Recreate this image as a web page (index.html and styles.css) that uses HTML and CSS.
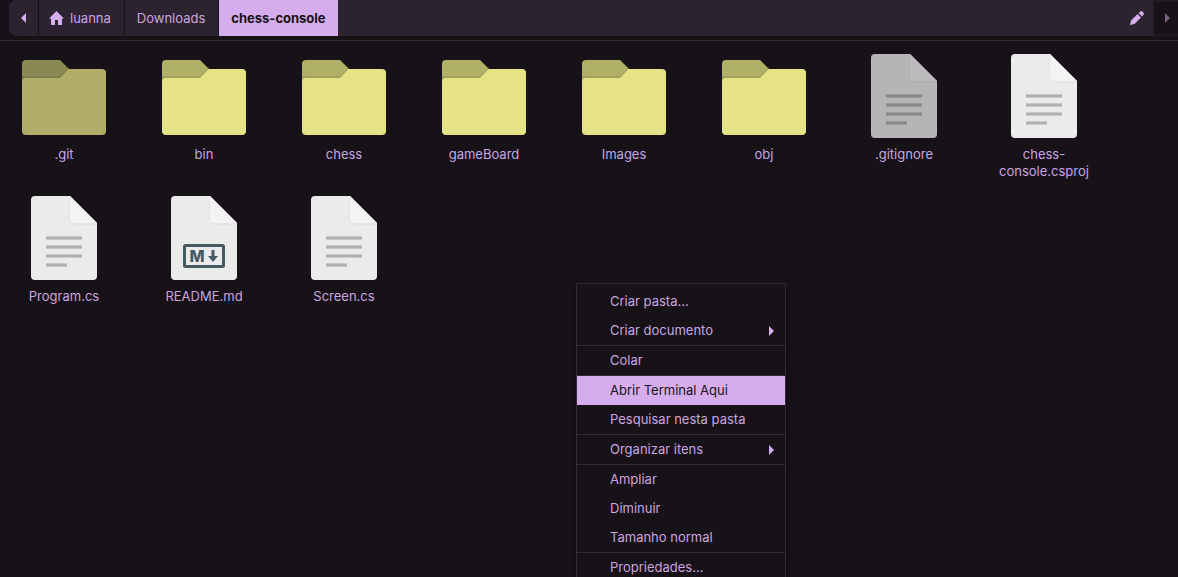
FILE: index.html
```html
<!DOCTYPE html>
<html lang="pt-BR">
<head>
<meta charset="utf-8">
<title>chess-console</title>
<link rel="stylesheet" href="styles.css">
</head>
<body>
<svg class="defs" aria-hidden="true">
  <symbol id="folder" viewBox="0 0 96 96">
    <path d="M10 12H44L55 23V40H6V16a4 4 0 0 1 4-4z" fill="#b1b067"/>
    <path d="M6 28H44L53 19V22L44 31H6z" fill="#8d8c50" opacity=".4"/>
    <path d="M52.500 21H86a4 4 0 0 1 4 4V83a4 4 0 0 1-4 4H10a4 4 0 0 1-4-4V34a4 4 0 0 1 4-4H44z" fill="#e5e386"/>
  </symbol>
  <symbol id="sheet" viewBox="0 0 96 96">
    <path d="M19 6H54L81 33V86a4 4 0 0 1-4 4H19a4 4 0 0 1-4-4V10a4 4 0 0 1 4-4z" fill="#ebebeb"/>
    <path d="M54 7V29a5 5 0 0 0 5 5H81" fill="none" stroke="#dcdcdc"/>
    <path d="M54 6L81 33H58a4 4 0 0 1-4-4z" fill="#f3f3f3"/>
  </symbol>
  <symbol id="text-file" viewBox="0 0 96 96">
    <use href="#sheet"/>
    <path d="M30 48H66M30 57H66M30 66H66M30 75H51" stroke="#c8c8c8" stroke-width="4"/>
    <path d="M30 48H66M30 57H66M30 66H66M30 75H51" stroke="#b1b1b1" stroke-width="2"/>
  </symbol>
</svg>

<nav class="pathbar" aria-label="Local">
  <div class="track">
    <button class="crumb back" aria-label="Voltar"><svg width="5" height="10" viewBox="0 0 5 10"><path d="M5 0V10L0 5z"/></svg></button>
    <button class="crumb home"><svg width="15" height="14" viewBox="0 0 15 14"><path d="M7.500 0L15 7.500H13V14H9V9H6V14H2V7.500H0z"/></svg>luanna</button>
    <button class="crumb">Downloads</button>
    <button class="crumb active" aria-current="page">chess-console</button>
    <button class="edit" aria-label="Editar local"><svg width="14" height="14" viewBox="0 0 14 14"><path d="M0 14L1 9.500L7.500 3L11 6.500L4.500 13zM8.500 2L10 .7Q11.300-.5 12.500.7L13.300 1.500Q14.500 2.700 13.300 4L12 5.500z"/></svg></button>
  </div>
  <button class="forward" aria-label="Avançar" disabled><svg width="5" height="10" viewBox="0 0 5 10"><path d="M0 0V10L5 5z"/></svg></button>
</nav>

<main class="files">
  <figure class="file hidden"><svg class="icon"><use href="#folder"/></svg><figcaption>.git</figcaption></figure>
  <figure class="file"><svg class="icon"><use href="#folder"/></svg><figcaption>bin</figcaption></figure>
  <figure class="file"><svg class="icon"><use href="#folder"/></svg><figcaption>chess</figcaption></figure>
  <figure class="file"><svg class="icon"><use href="#folder"/></svg><figcaption>gameBoard</figcaption></figure>
  <figure class="file"><svg class="icon"><use href="#folder"/></svg><figcaption>Images</figcaption></figure>
  <figure class="file"><svg class="icon"><use href="#folder"/></svg><figcaption>obj</figcaption></figure>
  <figure class="file hidden"><svg class="icon"><use href="#text-file"/></svg><figcaption>.gitignore</figcaption></figure>
  <figure class="file"><svg class="icon"><use href="#text-file"/></svg><figcaption>chess-console.csproj</figcaption></figure>
  <figure class="file"><svg class="icon"><use href="#text-file"/></svg><figcaption>Program.cs</figcaption></figure>
  <figure class="file">
    <svg class="icon" viewBox="0 0 96 96">
      <use href="#sheet"/>
      <rect x="28.500" y="55.500" width="39" height="21" rx="1" fill="none" stroke="#465a65" stroke-width="3"/>
      <text class="mark" x="41" y="72" text-anchor="middle">M</text>
      <path d="M55.500 60h3v6h3.500l-5 6-5-6h3.500z" fill="#465a65"/>
    </svg>
    <figcaption>README.md</figcaption>
  </figure>
  <figure class="file"><svg class="icon"><use href="#text-file"/></svg><figcaption>Screen.cs</figcaption></figure>
</main>

<div class="menu" role="menu">
  <div class="group">
    <button class="item" role="menuitem">Criar pasta...</button>
    <button class="item" role="menuitem">Criar documento<svg width="5" height="10" viewBox="0 0 5 10"><path d="M0 0V10L5 5z"/></svg></button>
  </div>
  <div class="group">
    <button class="item" role="menuitem">Colar</button>
  </div>
  <div class="group">
    <button class="item selected" role="menuitem">Abrir Terminal Aqui</button>
    <button class="item" role="menuitem">Pesquisar nesta pasta</button>
  </div>
  <div class="group">
    <button class="item" role="menuitem">Organizar itens<svg width="5" height="10" viewBox="0 0 5 10"><path d="M0 0V10L5 5z"/></svg></button>
  </div>
  <div class="group">
    <button class="item" role="menuitem">Ampliar</button>
    <button class="item" role="menuitem">Diminuir</button>
    <button class="item" role="menuitem">Tamanho normal</button>
  </div>
  <div class="group">
    <button class="item" role="menuitem">Propriedades...</button>
  </div>
</div>
</body>
</html>
```
FILE: styles.css
```css
:root {
  --bg: #171217;
  --bar: #2b232f;
  --line: #332b38;
  --accent: #d6adec;
  --text: #cba5e0;
}

* { box-sizing: border-box; }

body {
  margin: 0;
  min-height: 100vh;
  overflow: hidden;
  background: var(--bg);
  color: var(--text);
  font: 13px/17px Inter, "Noto Sans", sans-serif;
}

button {
  margin: 0;
  padding: 0;
  border: 0;
  background: none;
  color: inherit;
  font: inherit;
  text-align: left;
}

svg { fill: var(--accent); flex: none; }

.defs { position: absolute; width: 0; height: 0; }

.pathbar {
  display: flex;
  height: 41px;
  padding: 0 0 4px 9px;
  border-bottom: 1px solid var(--line);
}

.track {
  display: flex;
  flex: 1;
  background: var(--bar);
  border-radius: 8px 0 0 8px;
}

.crumb {
  display: flex;
  align-items: center;
  padding: 0 13px 0 12px;
  border-right: 1px solid var(--bg);
}

.back { width: 30px; }

.home { gap: 6px; padding-left: 10px; }

.active {
  padding: 0 12px;
  background: var(--accent);
  color: var(--bg);
  font-weight: 700;
  border-right: 0;
}

.edit {
  display: flex;
  align-items: center;
  margin-left: auto;
  padding: 0 9px;
}

.forward {
  display: flex;
  align-items: center;
  justify-content: center;
  width: 25px;
  padding-left: 3px;
  border: 2px solid #211a24;
  border-width: 2px 0 2px 1px;
}

.forward svg { opacity: .5; }

.files {
  display: grid;
  grid-template-columns: repeat(auto-fill, 100px);
  gap: 10px 40px;
  padding: 7px 14px;
}

.file {
  display: flex;
  flex-direction: column;
  align-items: center;
  gap: 2px;
  margin: 0;
  text-align: center;
}

.icon { width: 96px; height: 96px; }

.hidden .icon { opacity: .75; }

.mark {
  fill: #465a65;
  font: 800 16px Inter, sans-serif;
}

.menu {
  position: absolute;
  top: 283px;
  left: 576px;
  width: 210px;
  padding: 3px 0;
  border: 1px solid var(--line);
  background: var(--bg);
  box-shadow: 0 2px 6px rgba(0, 0, 0, .4);
}

.group + .group { border-top: 1px solid var(--line); }

.item {
  display: flex;
  align-items: center;
  justify-content: space-between;
  width: 100%;
  height: 29px;
  padding: 0 11px 0 33px;
}

.selected {
  background: var(--accent);
  color: var(--bg);
}
```
